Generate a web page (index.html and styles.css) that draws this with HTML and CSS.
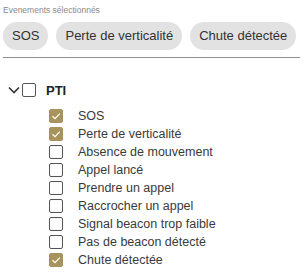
FILE: index.html
```html
<!DOCTYPE html>
<html>
<head>
<meta charset="utf-8">
<link rel="stylesheet" href="styles.css">
</head>
<body>
<div class="panel">
  <div class="label">Evenements sélectionnés</div>
  <div class="chips">
    <span class="chip">SOS</span>
    <span class="chip">Perte de verticalité</span>
    <span class="chip">Chute détectée</span>
  </div>
  <div class="divider"></div>
  <div class="tree">
    <div class="parent">
      <svg class="chev" width="12" height="8" viewBox="0 0 12 8"><path d="M1 1.5 L6 6.5 L11 1.5" fill="none" stroke="#333" stroke-width="1.6"/></svg>
      <span class="box"></span>
      <span class="ptitle">PTI</span>
    </div>
    <div class="children">
      <div class="row"><span class="box checked"><svg width="14" height="14" viewBox="0 0 14 14"><path d="M3.5 7.2 L6 9.6 L10.8 4.6" fill="none" stroke="#fff" stroke-width="1.2"/></svg></span><span class="txt">SOS</span></div>
      <div class="row"><span class="box checked"><svg width="14" height="14" viewBox="0 0 14 14"><path d="M3.5 7.2 L6 9.6 L10.8 4.6" fill="none" stroke="#fff" stroke-width="1.2"/></svg></span><span class="txt">Perte de verticalité</span></div>
      <div class="row"><span class="box"></span><span class="txt">Absence de mouvement</span></div>
      <div class="row"><span class="box"></span><span class="txt">Appel lancé</span></div>
      <div class="row"><span class="box"></span><span class="txt">Prendre un appel</span></div>
      <div class="row"><span class="box"></span><span class="txt">Raccrocher un appel</span></div>
      <div class="row"><span class="box"></span><span class="txt">Signal beacon trop faible</span></div>
      <div class="row"><span class="box"></span><span class="txt">Pas de beacon détecté</span></div>
      <div class="row"><span class="box checked"><svg width="14" height="14" viewBox="0 0 14 14"><path d="M3.5 7.2 L6 9.6 L10.8 4.6" fill="none" stroke="#fff" stroke-width="1.2"/></svg></span><span class="txt">Chute détectée</span></div>
    </div>
  </div>
</div>
</body>
</html>
```
FILE: styles.css
```css
html, body { margin: 0; padding: 0; background: #fff; }
body { font-family: "Liberation Sans", Arial, sans-serif; color: #333; }
.panel { padding: 5px 6px 0 3px; width: 297px; }
.label { font-size: 8.5px; color: #8a8a8a; line-height: 11px; height: 11px; }
.chips { display: flex; gap: 8px; margin-top: 6px; }
.chip { background: #e2e2e2; border-radius: 14px; height: 28px; line-height: 28px; padding: 0 9px; font-size: 13px; color: #333; white-space: nowrap; }
.divider { height: 1px; background: #8f8f8f; margin-top: 7px; }
.tree { margin-top: 25px; }
.parent { display: flex; align-items: center; height: 14px; padding-left: 5px; }
.chev { margin-right: 2px; }
.box { width: 12px; height: 12px; border: 1px solid #555; border-radius: 2px; display: inline-flex; box-sizing: content-box; flex: none; background: #fff; }
.ptitle { font-weight: bold; font-size: 13px; margin-left: 10px; color: #222; }
.children { margin-top: 10px; padding-left: 46px; }
.row { display: flex; align-items: center; height: 18px; }
.box.checked { background: #a8935f; border-color: #a8935f; position: relative; }
.box.checked::before { content: ""; position: absolute; left: -8px; top: -8px; width: 30px; height: 30px; border-radius: 50%; background: #f7f7f7; z-index: -1; }
.box.checked svg { margin: -1px; }
.txt { margin-left: 15px; font-size: 12.5px; color: #3a3a3a; white-space: nowrap; }
```
